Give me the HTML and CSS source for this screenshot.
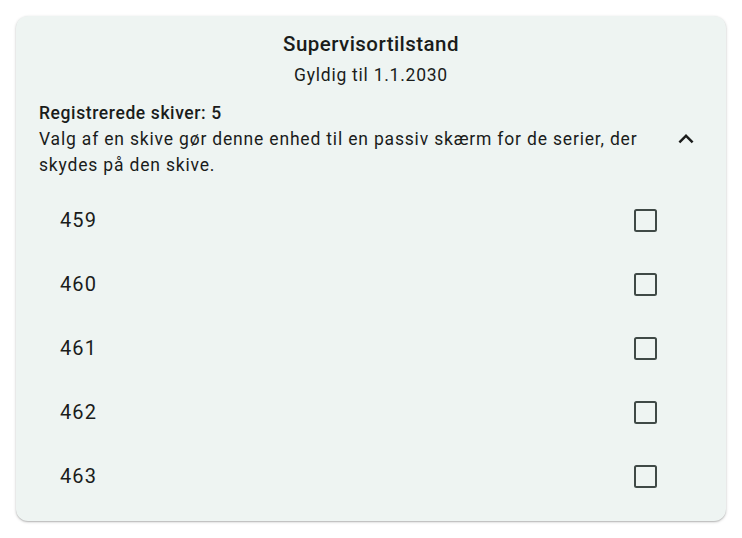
FILE: index.html
```html
<!DOCTYPE html>
<html lang="da">
<head>
<meta charset="utf-8">
<title>Supervisortilstand</title>
<link rel="stylesheet" href="styles.css">
</head>
<body>
<div class="card">
  <div class="title">Supervisortilstand</div>
  <div class="subtitle">Gyldig til 1.1.2030</div>
  <div class="info">
    <div class="info-text">
      <div class="count">Registrerede skiver: 5</div>
      <div class="desc">Valg af en skive gør denne enhed til en passiv skærm for de serier, der skydes på den skive.</div>
    </div>
    <svg class="chevron" viewBox="0 0 24 24" width="30" height="30"><path d="M12 8l-6 6 1.41 1.41L12 10.83l4.59 4.58L18 14z" fill="#1a1c1b"/></svg>
  </div>
  <ul class="list">
    <li class="row"><span class="num">459</span><span class="box"></span></li>
    <li class="row"><span class="num">460</span><span class="box"></span></li>
    <li class="row"><span class="num">461</span><span class="box"></span></li>
    <li class="row"><span class="num">462</span><span class="box"></span></li>
    <li class="row"><span class="num">463</span><span class="box"></span></li>
  </ul>
</div>
</body>
</html>
```
FILE: styles.css
```css
html, body {
  margin: 0;
  padding: 0;
  background: #ffffff;
}
body {
  font-family: Roboto, "Liberation Sans", sans-serif;
  color: #1a1c1b;
  padding: 16px;
}
.card {
  width: 710px;
  height: 505px;
  box-sizing: border-box;
  background: #eef4f2;
  border-radius: 12px;
  box-shadow: 0 1px 3px rgba(0,0,0,0.22), 0 1px 1px rgba(0,0,0,0.12);
  padding: 14px 23px 0 23px;
  display: flex;
  flex-direction: column;
}
.title {
  text-align: center;
  font-size: 20.5px;
  line-height: 28px;
  font-weight: 500;
  letter-spacing: 0.45px;
}
.subtitle {
  text-align: center;
  font-size: 17.5px;
  line-height: 26px;
  margin-top: 4px;
  letter-spacing: 0.75px;
}
.info {
  display: flex;
  align-items: center;
  margin-top: 12px;
}
.info-text {
  flex: 1;
  padding-right: 12px;
}
.count {
  font-size: 17.5px;
  line-height: 26px;
  font-weight: 500;
  letter-spacing: 0.6px;
}
.desc {
  font-size: 17.5px;
  line-height: 26px;
  letter-spacing: 0.82px;
}
.chevron {
  flex: none;
  margin-right: 2px;
}
.list {
  list-style: none;
  margin: 10px 0 0 0;
  padding: 0;
}
.row {
  height: 64px;
  display: flex;
  align-items: center;
  justify-content: space-between;
  padding: 0 46px 0 21px;
}
.num {
  font-size: 20px;
  letter-spacing: 1.1px;
}
.box {
  width: 23px;
  height: 23px;
  box-sizing: border-box;
  border: 2.6px solid #3f4946;
  border-radius: 2.5px;
}
```
